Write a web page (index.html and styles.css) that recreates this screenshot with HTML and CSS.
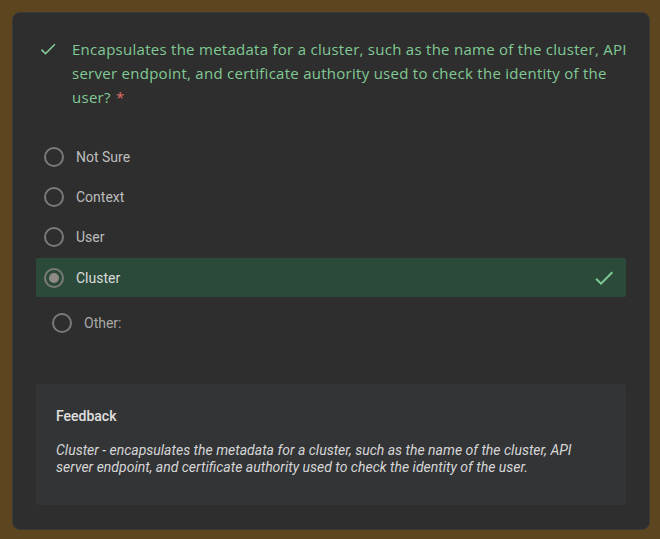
FILE: index.html
```html
<!DOCTYPE html>
<html>
<head>
<meta charset="utf-8">
<link rel="stylesheet" href="styles.css">
</head>
<body>
<div class="card">
  <div class="question">
    <svg class="qcheck" width="20" height="20" viewBox="0 0 24 24"><path d="M9 16.2L4.8 12l-1.4 1.4L9 19 21 7l-1.4-1.4L9 16.2z" fill="#81c995"/></svg>
    <div class="qtext"><span class="qt">Encapsulates the metadata for a cluster, such as the name of the cluster, API server endpoint, and certificate authority used to check the identity of the user?</span> <span class="req">*</span></div>
  </div>
  <div class="options">
    <div class="opt"><span class="radio"></span><span class="label">Not Sure</span></div>
    <div class="opt"><span class="radio"></span><span class="label">Context</span></div>
    <div class="opt"><span class="radio"></span><span class="label">User</span></div>
    <div class="opt selected"><span class="radio checked"></span><span class="label">Cluster</span>
      <svg class="ocheck" width="24" height="24" viewBox="0 0 24 24"><path d="M9 16.2L4.8 12l-1.4 1.4L9 19 21 7l-1.4-1.4L9 16.2z" fill="#81c995"/></svg>
    </div>
    <div class="opt other"><span class="radio"></span><span class="label">Other:</span></div>
  </div>
  <div class="feedback">
    <div class="fb-title">Feedback</div>
    <div class="fb-text">Cluster - encapsulates the metadata for a cluster, such as the name of the cluster, API server endpoint, and certificate authority used to check the identity of the user.</div>
  </div>
</div>
</body>
</html>
```
FILE: styles.css
```css
html, body { margin: 0; padding: 0; }
body {
  background: #5d4520;
  width: 660px;
  height: 539px;
  padding: 12px 10px 9px 12px;
  box-sizing: border-box;
  font-family: Roboto, "Liberation Sans", sans-serif;
}
.card {
  width: 638px;
  height: 518px;
  box-sizing: border-box;
  background: #2e2e2e;
  border: 1px solid #3a3a3a;
  border-radius: 8px;
  padding: 24px 23px 24px 23px;
  display: flex;
  flex-direction: column;
}
.question {
  display: flex;
  align-items: flex-start;
  padding-left: 2px;
}
.qcheck { margin-top: 2px; margin-right: 14px; flex: none; }
.qtext {
  font-family: "Open Sans", sans-serif;
  font-size: 15px;
  line-height: 24px;
  color: #81c995;
  letter-spacing: 0.27px;
  width: 560px;
  flex: none;
}
.req { color: #e06f6a; letter-spacing: 0; margin-left: 1px; }
.options {
  margin-top: 28px;
  display: flex;
  flex-direction: column;
}
.opt {
  height: 40px;
  display: flex;
  align-items: center;
  padding-left: 8px;
  border-radius: 2px;
}
.radio {
  width: 16px;
  height: 16px;
  border: 2px solid #7a7a7a;
  border-radius: 50%;
  box-sizing: content-box;
  flex: none;
  position: relative;
}
.radio.checked::after {
  content: "";
  position: absolute;
  left: 3px; top: 3px;
  width: 10px; height: 10px;
  border-radius: 50%;
  background: #8f8a86;
}
.label {
  margin-left: 12px;
  font-size: 14px;
  color: #bdbdbd;
}
.selected {
  background: #2b4a39;
  height: 39px;
  margin-top: 1px;
}
.selected .label { color: #dcdcdc; }
.ocheck { margin-left: auto; margin-right: 10px; }
.other {
  padding-left: 16px;
  margin-top: 6px;
}
.other .label { color: #a8a8a8; }
.feedback {
  margin-top: auto;
  background: #333436;
  height: 121px;
  box-sizing: border-box;
  padding: 24px 20px 0 20px;
  border-radius: 2px;
}
.fb-title {
  font-size: 14px;
  font-weight: 500;
  color: #e0e0e0;
}
.fb-text {
  margin-top: 18px;
  font-size: 14px;
  line-height: 17px;
  font-style: italic;
  color: #d6d6d6;
}
```
